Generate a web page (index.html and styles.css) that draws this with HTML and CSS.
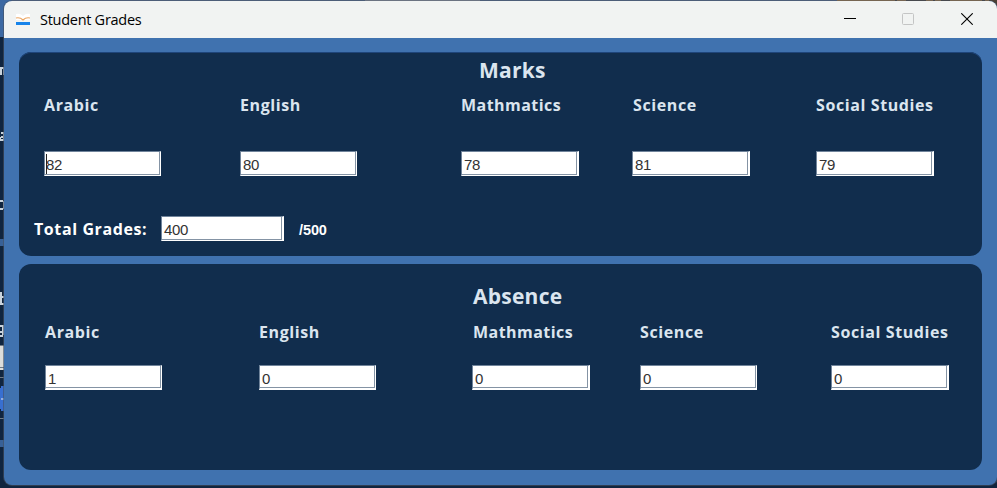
FILE: index.html
```html
<!DOCTYPE html>
<html lang="en">
<head>
<meta charset="utf-8">
<title>Student Grades</title>
<link rel="stylesheet" href="styles.css">
</head>
<body>
<div class="desktop">
  <svg class="backdrop" width="997" height="488" viewBox="0 0 997 488" shape-rendering="crispEdges" aria-hidden="true">
    <path fill="#10253f" d="M0 0h997v488H0z"/>
    <path fill="#3c69a3" d="M0 0h12v37H0z"/>
    <path fill="#56709f" d="M12 0h825v1H12z"/>
    <path fill="#a3a9b5" d="M365 0h115v1H365z"/>
    <path fill="#bd8540" d="M837 0h160v12H837z"/>
    <path fill="#4a4034" d="M895 0h2v1h-2zM906 0h20v1h-20zM933 0h2v1h-2zM941 0h9v1h-9zM982 0h3v1h-3zM989 0h8v12h-8z"/>
    <path fill="#386197" d="M0 239h4v7H0zM0 440h4v7H0z"/>
    <path fill="#dcdcda" d="M0 345h4v25H0z"/>
    <path fill="#707a85" d="M0 345h4v1H0zM0 367h4v1H0zM0 377h4v1H0zM0 418h4v1H0z"/>
    <path fill="#386fd0" d="M0 388h1v-2h3v25H1v-2H0z"/>
    <path fill="#8faee5" d="M1 398h3v2H1z"/>
    <path fill="#c9d3dc" d="M0 67h2v8H0zM2 67h2v2H2zM3 69h1v6H3zM1 132h3v2H1zM3 134h1v7H3zM1 136h2v2H1zM0 137h1v4H0zM1 139h2v2H1zM0 200h3v2H0zM3 201h1v8H3zM0 208h3v2H0zM0 292h2v13H0zM2 296h2v2H2zM2 303h2v2H2zM0 325h4v2H0zM2 327h2v8H2zM0 331h2v2H0zM0 335h3v2H0z"/>
  </svg>
  <main class="window">
    <header class="titlebar">
      <svg class="app-icon" width="16" height="16" viewBox="0 0 16 16">
        <path fill="#fff" d="M1 2Q5 1 8 4Q11 1 15 2V8H1z"/>
        <path fill="none" stroke="#eba663" stroke-width="1.1" d="M1 6Q5 5 8 8Q11 5 15 6"/>
        <path fill="#1683ea" shape-rendering="crispEdges" d="M1 10h14v3H1z"/>
      </svg>
      <span class="caption">Student Grades</span>
      <div class="controls">
        <svg width="12" height="12" viewBox="0 0 12 12"><path d="M0 5.5h12" stroke="#000"/></svg>
        <svg width="12" height="12" viewBox="0 0 12 12"><rect x=".5" y=".5" width="11" height="11" rx="1" fill="none" stroke="#c4c5c5"/></svg>
        <svg width="12" height="12" viewBox="0 0 12 12"><path d="M.3.3l11.4 11.4M11.7.3L.3 11.7" stroke="#000" stroke-width="1.1"/></svg>
      </div>
    </header>
    <div class="content">
      <section class="panel marks">
        <h2>Marks</h2>
        <div class="grid">
          <div class="item"><span class="label">Arabic</span><div class="field focused">82</div></div>
          <div class="item"><span class="label">English</span><div class="field">80</div></div>
          <div class="item"><span class="label math">Mathmatics</span><div class="field wide">78</div></div>
          <div class="item"><span class="label indent">Science</span><div class="field wide">81</div></div>
          <div class="item"><span class="label">Social Studies</span><div class="field wide">79</div></div>
        </div>
        <div class="total">
          <span class="label total-label">Total Grades:</span>
          <div class="field total-field">400</div>
          <span class="max">/500</span>
        </div>
      </section>
      <section class="panel absence">
        <h2>Absence</h2>
        <div class="grid">
          <div class="item"><span class="label">Arabic</span><div class="field">1</div></div>
          <div class="item"><span class="label">English</span><div class="field">0</div></div>
          <div class="item"><span class="label math indent">Mathmatics</span><div class="field wide">0</div></div>
          <div class="item"><span class="label">Science</span><div class="field">0</div></div>
          <div class="item"><span class="label">Social Studies</span><div class="field wide">0</div></div>
        </div>
      </section>
    </div>
  </main>
</div>
</body>
</html>
```
FILE: styles.css
```css
* { box-sizing: border-box; }
body { margin: 0; overflow: hidden; }
.desktop {
  position: relative;
  width: 997px;
  height: 488px;
  padding: 1px 0 3px 4px;
  font-family: "Open Sans", "Noto Sans", sans-serif;
}
.backdrop { position: absolute; left: 0; top: 0; }
.window {
  position: relative;
  height: 484px;
  background: #4072af;
  border-radius: 8px;
  overflow: hidden;
  box-shadow: 0 0 0 1px rgba(70, 80, 95, .6);
}
.titlebar {
  display: flex;
  align-items: center;
  height: 37px;
  padding: 0 24px 0 11px;
  background: #f1f3f2;
}
.app-icon { display: block; }
.caption { margin-left: 9px; font-family: "Open Sans", sans-serif; font-size: 14.5px; line-height: 20px; letter-spacing: -.28px; color: #000; }
.controls { display: flex; gap: 46px; margin-left: auto; }
.controls svg { display: block; }
.controls svg:nth-child(-n+2) { position: relative; left: -1px; top: -1px; }
.controls svg:nth-child(3) { position: relative; top: -1px; }
.content { display: flex; flex-direction: column; gap: 8px; padding: 14px 15px 15px; }
.panel { background: #112d4d; border-radius: 12px; color: #dbe5ef; }
.marks { height: 204px; box-shadow: inset 0 1px #1f457a; }
.absence { height: 206px; padding-top: 18px; }
h2 { margin: 0; font-size: 21px; font-weight: 700; line-height: 28px; letter-spacing: .25px; }
.marks h2 { padding: 4px 0 0 460px; }
.absence h2 { padding-left: 454px; }
.grid { display: grid; }
.marks .grid { grid-template-columns: 196px 221px 171px 184px 1fr; padding: 9px 0 0 25px; }
.absence .grid { grid-template-columns: 214px 213px 168px 191px 1fr; padding: 10px 0 0 26px; }
.item { display: flex; flex-direction: column; }
.marks .item { gap: 34px; }
.absence .item { gap: 21px; }
.label { font-size: 16px; font-weight: 700; line-height: 24px; letter-spacing: .6px; white-space: nowrap; }
.label.math { letter-spacing: .45px; }
.label.indent { padding-left: 1px; }
.field {
  position: relative;
  width: 117px;
  height: 25px;
  padding: 2px 0 0 2px;
  background: #fff;
  border: 1px solid #fff;
  border-top-color: #70849b;
  border-left-color: #70849b;
  box-shadow: inset -1px -1px #8493a4;
  font: 15px/21px "Liberation Sans", sans-serif;
  letter-spacing: -.4px;
  color: #333;
}
.field.wide { width: 118px; border-right-width: 2px; }
.absence .field { border-bottom-width: 2px; }
.field.focused { padding-left: 1px; }
.field.focused::before { content: ""; position: absolute; left: 1px; top: 2px; width: 1px; height: 20px; background: #222; }
.total { display: flex; align-items: center; padding: 40px 0 0 15px; color: #fff; }
.total-label { width: 127px; }
.field.total-field { width: 123px; border-right-width: 2px; }
.max { margin-left: 15px; padding-top: 2px; font: 700 14.5px/20px "Liberation Sans", sans-serif; letter-spacing: -.1px; }
```
